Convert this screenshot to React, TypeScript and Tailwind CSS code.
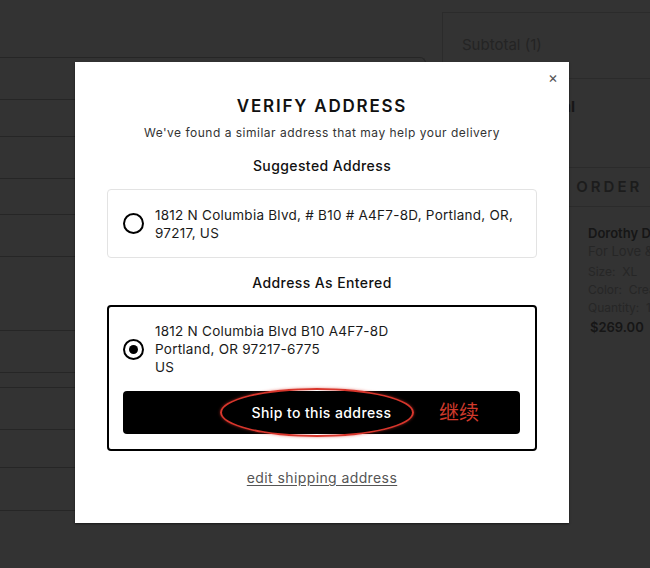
import React from "react";

const leftRows = [42, 37, 42, 36, 42, 74, 42, 15, 42, 38, 43, 60];

function Page() {
  return (
    <div className="flex h-[568px] w-[650px] overflow-hidden bg-[#333333] font-['Inter',sans-serif]">
      {/* left form column */}
      <div className="mt-[57px] w-[426px] shrink-0">
        {leftRows.map((h, i) => (
          <div
            key={i}
            style={{ height: h }}
            className={
              "border-t border-[#262626] " +
              (i === 0 ? "rounded-tr-[6px] border-r" : "")
            }
          />
        ))}
      </div>

      {/* right summary column */}
      <div className="ml-[16px] min-w-0 flex-1">
        <div className="mt-[12px] border-l border-t border-[#2b2b2b]">
          <div className="flex h-[66px] items-center border-b border-[#2b2b2b] pl-[19px] text-[15px] text-[#242424]">
            Subtotal (1)
          </div>
          <div className="h-[70px] whitespace-nowrap pl-[19px] pt-[17px] text-[15px] font-bold text-[#161616]">
            Estimated Total
          </div>
        </div>
        <div className="mt-[18px] border-l border-t border-[#2b2b2b]">
          <div className="flex h-[39px] items-center whitespace-nowrap border-b border-[#2b2b2b] pl-[72px] text-[15px] font-semibold tracking-[3px] text-[#1c1c1c]">
            YOUR ORDER (1)
          </div>
          <div className="flex pl-[145px] pt-[17px]">
            <div className="whitespace-nowrap text-[12px] leading-[18px] text-[#262626]">
              <div className="text-[13px] font-semibold text-[#161616]">Dorothy Dress</div>
              <div className="text-[13px]">For Love &amp; Lemons</div>
              <div className="mt-[3px]">Size:&nbsp; XL</div>
              <div>Color:&nbsp; Cream</div>
              <div>Quantity:&nbsp; 1</div>
              <div className="ml-[2px] mt-[1px] text-[13px] font-semibold text-[#161616]">$269.00</div>
            </div>
          </div>
        </div>
      </div>
    </div>
  );
}

function Radio({ checked }: { checked: boolean }) {
  return (
    <div className="flex h-[21px] w-[21px] shrink-0 items-center justify-center rounded-full border-2 border-black">
      {checked && <div className="h-[9px] w-[9px] rounded-full bg-black" />}
    </div>
  );
}

function VerifyModal() {
  return (
    <div className="absolute left-[75px] top-[62px] h-[461px] w-[494px] bg-white font-['Inter',sans-serif] shadow-[0_1px_2px_rgba(0,0,0,0.5)]">
      <button className="absolute right-[11px] top-[8px] text-[15px] leading-none text-[#555]">×</button>

      <div className="flex flex-col items-center px-[32px] pt-[33px]">
        <h2 className="text-[17px] font-semibold leading-[22px] tracking-[1.8px] text-[#111]">VERIFY ADDRESS</h2>
        <p className="mt-[8px] text-[12px] leading-[16px] tracking-[0.5px] text-[#333]">
          We've found a similar address that may help your delivery
        </p>
        <h3 className="mt-[15px] text-[14px] font-medium leading-[20px] tracking-[0.4px] text-[#111]">Suggested Address</h3>

        <div className="mt-[13px] flex h-[69px] w-full items-center gap-[11px] rounded-[4px] border border-[#e3e3e3] px-[15px]">
          <Radio checked={false} />
          <div className="text-[13.5px] leading-[18px] tracking-[0.25px] text-[#1a1a1a]">
            1812 N Columbia Blvd, # B10 # A4F7-8D, Portland, OR,
            <br />
            97217, US
          </div>
        </div>

        <h3 className="mt-[15px] text-[14px] font-medium leading-[20px] tracking-[0.4px] text-[#111]">Address As Entered</h3>

        <div className="mt-[12px] w-full rounded-[4px] border-2 border-black pb-[15px] pl-[14px] pr-[15px] pt-[15px]">
          <div className="flex items-center gap-[11px]">
            <Radio checked={true} />
            <div className="text-[13.5px] leading-[18px] tracking-[0.25px] text-[#1a1a1a]">
              1812 N Columbia Blvd B10 A4F7-8D
              <br />
              Portland, OR 97217-6775
              <br />
              US
            </div>
          </div>
          <div className="relative mt-[15px] flex h-[43px] items-center justify-center rounded-[4px] bg-black">
            <span className="text-[14px] font-medium tracking-[0.4px] text-white">Ship to this address</span>
            {/* red annotation on top of the button */}
            <div className="pointer-events-none absolute left-[97px] top-[-3px] h-[49px] w-[194px] rounded-[50%] border-2 border-[#d8362c] shadow-[0_0_3px_rgba(216,54,44,0.6)]" />
            <span className="absolute left-[316px] top-[8px] font-['Noto_Sans_CJK_SC',sans-serif] text-[20px] leading-[26px] text-[#d03a2c]">
              继续
            </span>
          </div>
        </div>

        <a className="mt-[17px] text-[14px] leading-[20px] tracking-[0.4px] text-[#555] underline underline-offset-2">edit shipping address</a>
      </div>
    </div>
  );
}

export default function App() {
  return (
    <div className="relative h-[568px] w-[650px] overflow-hidden">
      <Page />
      <VerifyModal />
    </div>
  );
}
